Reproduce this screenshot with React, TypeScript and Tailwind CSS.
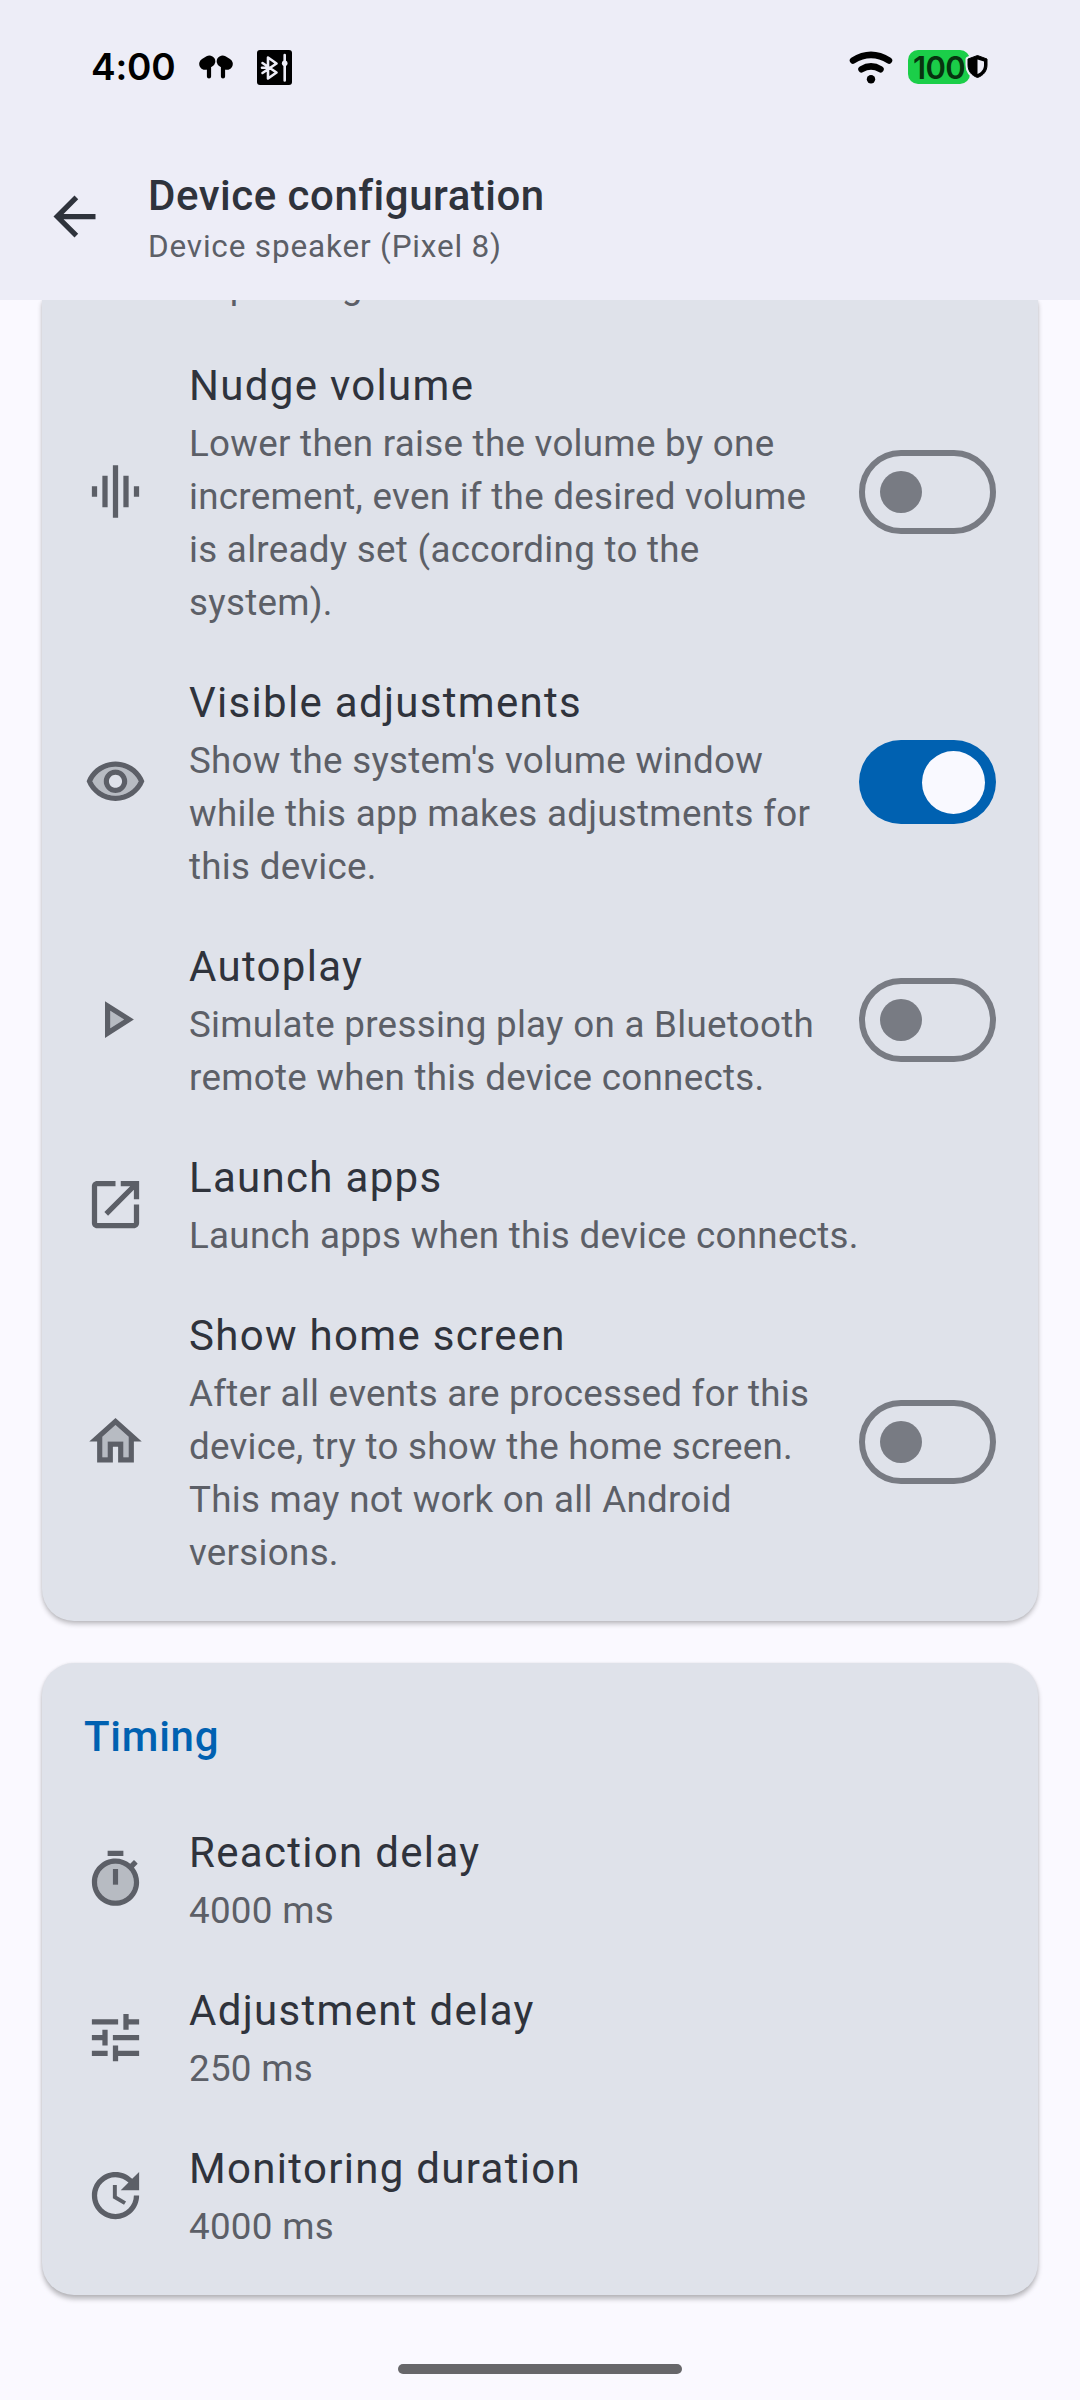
import type { ReactNode } from "react";

function Icon({ children, className = "" }: { children: ReactNode; className?: string }) {
  return (
    <svg viewBox="0 0 24 24" fill="currentColor" className={`size-[63px] shrink-0 ${className}`}>
      {children}
    </svg>
  );
}

const icons = {
  wave: <path d="M7 18h2V6H7v12zm4 4h2V2h-2v20zm-8-8h2v-4H3v4zm12 4h2V6h-2v12zm4-8v4h2v-4h-2z" />,
  eye: (
    <>
      <path
        opacity=".3"
        d="M12 6c-3.79 0-7.17 2.13-8.82 5.500C4.830 14.870 8.210 17 12 17s7.170-2.130 8.820-5.500C19.170 8.130 15.790 6 12 6zm0 10c-2.480 0-4.500-2.020-4.500-4.500S9.520 7 12 7s4.500 2.020 4.500 4.500S14.480 16 12 16z"
      />
      <path d="M12 4C7 4 2.730 7.110 1 11.500 2.730 15.890 7 19 12 19s9.270-3.110 11-7.500C21.270 7.110 17 4 12 4zm0 13c-3.790 0-7.170-2.130-8.820-5.500C4.830 8.130 8.210 6 12 6s7.170 2.130 8.820 5.500C19.170 14.870 15.790 17 12 17zm0-10c-2.480 0-4.500 2.020-4.500 4.500S9.520 16 12 16s4.500-2.020 4.500-4.500S14.480 7 12 7zm0 7c-1.380 0-2.500-1.120-2.500-2.500S10.620 9 12 9s2.500 1.120 2.500 2.500S13.380 14 12 14z" />
    </>
  ),
  play: (
    <>
      <path opacity=".3" d="M10 8.640v6.720L15.270 12z" />
      <path d="M8 19l11-7L8 5v14zm2-10.360L15.270 12 10 15.360V8.640z" />
    </>
  ),
  launch: (
    <path d="M5 3h7v2H5v14h14v-7h2v7c0 1.100-.9 2-2 2H5c-1.110 0-2-.9-2-2V5c0-1.100.89-2 2-2zM14 3h7v7h-2V6.410l-9.830 9.830-1.410-1.410L17.590 5H14V3z" />
  ),
  home: (
    <>
      <path opacity=".3" d="M12 5.690l-5 4.500V18h2v-6h6v6h2v-7.810l-5-4.500z" />
      <path d="M12 3 2 12h3v8h6v-6h2v6h6v-8h3L12 3zm5 15h-2v-6H9v6H7v-7.810l5-4.500 5 4.500V18z" />
    </>
  ),
  timer: (
    <>
      <path
        opacity=".3"
        d="M12 6c-3.870 0-7 3.130-7 7s3.130 7 7 7 7-3.130 7-7-3.130-7-7-7zm1 8h-2V8h2v6z"
      />
      <path d="M15 1H9v2h6V1zm-4 13h2V8h-2v6zm8.030-6.610 1.420-1.420c-.43-.51-.9-.99-1.410-1.410l-1.420 1.420C16.070 4.740 14.120 4 12 4c-4.970 0-9 4.030-9 9s4.020 9 9 9 9-4.030 9-9c0-2.120-.74-4.070-1.970-5.610zM12 20c-3.870 0-7-3.130-7-7s3.130-7 7-7 7 3.130 7 7-3.130 7-7 7z" />
    </>
  ),
  tune: (
    <path d="M3 17v2h6v-2H3zM3 5v2h10V5H3zm10 16v-2h8v-2h-8v-2h-2v6h2zM7 9v2H3v2h4v2h2V9H7zm14 4v-2H11v2h10zm-6-4h2V7h4V5h-4V3h-2v6z" />
  ),
  update: (
    <path d="M11 8v5l4.250 2.520.77-1.280-3.520-2.090V8H11zm10 2V3l-2.640 2.640C16.740 4.010 14.490 3 12 3c-4.970 0-9 4.030-9 9s4.030 9 9 9 9-4.030 9-9h-2c0 3.860-3.140 7-7 7s-7-3.140-7-7 3.140-7 7-7c1.930 0 3.680.79 4.950 2.050L14 10h7z" />
  ),
};

function Switch({ on }: { on: boolean }) {
  return on ? (
    <span className="flex h-[84px] w-[137px] shrink-0 items-center justify-end rounded-full bg-[#0061b1] pr-[11px]">
      <span className="size-[63px] rounded-full bg-[#f9f9ff]" />
    </span>
  ) : (
    <span className="flex h-[84px] w-[137px] shrink-0 items-center rounded-full border-6 border-[#787b83] pl-[15px]">
      <span className="size-[42px] rounded-full bg-[#787b83]" />
    </span>
  );
}

type RowProps = { icon: ReactNode; title: string; lines: string[]; on?: boolean };

function Row({ icon, title, lines, on }: RowProps) {
  return (
    <div className="flex items-center py-[21px] pr-[42px] pl-[42px]">
      <Icon className="text-[#5c5f67]">{icon}</Icon>
      <div className="ml-[42px] grow whitespace-nowrap">
        <h3 className="text-[42px] leading-[63px] tracking-[1.31px] text-[#2f333c]">{title}</h3>
        {lines.map((line) => (
          <p key={line} className="text-[36.75px] leading-[53px] tracking-[0.28px] text-[#5c5f67]">
            {line}
          </p>
        ))}
      </div>
      {on !== undefined && <Switch on={on} />}
    </div>
  );
}

export default function App() {
  return (
    <div className="flex h-[2400px] w-[1080px] flex-col overflow-hidden bg-[#faf9ff] font-['Roboto',sans-serif]">
      <header className="relative z-10 h-[300px] shrink-0 bg-[#ededf7]">
        <div className="flex h-[132px] items-center pr-[91px] pl-[91px] text-black">
          <span className="w-[85px] font-['Inter',sans-serif] text-[37px] leading-none font-semibold tracking-[-0.2px] whitespace-nowrap">
            4:00
          </span>
          <svg viewBox="0 0 34 25" className="mt-[3px] ml-[23px] h-[25px] w-[34px]">
            <g stroke="#000" strokeLinecap="round">
              <path d="M6 9 10.500 6.300M28 9 23.500 6.300" strokeWidth="11.600" />
              <path d="M10 9V21.500M24 9V21.500" strokeWidth="4.200" />
            </g>
          </svg>
          <svg viewBox="0 0 35 35" className="mt-[3px] ml-[24px] h-[35px] w-[35px]">
            <rect width="35" height="35" rx="3" />
            <g fill="none" stroke="#ededf7" strokeWidth="2.600" strokeLinecap="round" strokeLinejoin="round">
              <path d="m5.500 13 14 9.500-8.500 6V7.500l8.500 6-14 9.500M5 17.800h6M27.700 5v25.500" />
            </g>
            <circle cx="27.700" cy="13.300" r="2.800" fill="#ededf7" />
          </svg>
          <svg viewBox="0 0 44 33" className="mt-[2px] mr-[15px] ml-auto h-[33px] w-[44px]">
            <g fill="none" stroke="#000" strokeWidth="6.500" strokeLinecap="round">
              <path d="M4 9.500Q22 -1.800 40 9.500" />
              <path d="M12.500 18.300Q22 12.500 31.500 18.300" />
            </g>
            <circle cx="22" cy="28.300" r="4.200" />
          </svg>
          <div className="relative mt-[2px] mr-[19px] flex h-[34px] w-[62px] items-center rounded-[10px] bg-[#1bce49] pl-[5px]">
            <span className="font-['Inter',sans-serif] text-[31px] leading-none font-semibold tracking-[-0.6px] text-[#07340f]">
              100
            </span>
            <svg viewBox="0 0 27 31" className="absolute top-[2px] left-[56px] h-[31px] w-[27px]">
              <path
                d="M13.500 3.500 23 7v6c0 6-3.500 10.500-9.500 12.500C7.500 23.500 4 19 4 13V7z"
                stroke="#ededf7"
                strokeWidth="5"
                strokeLinejoin="round"
              />
              <path
                d="M13.500 3.500 23 7v6c0 6-3.500 10.500-9.500 12.500C7.500 23.500 4 19 4 13V7z"
                stroke="#000"
                strokeWidth="1"
                strokeLinejoin="round"
              />
              <path d="M13.500 7.500 20 9.500V13c0 4-2.300 7.200-6.500 9z" fill="#ededf7" />
            </svg>
          </div>
        </div>
        <div className="flex h-[168px] items-center pl-[43px]">
          <Icon className="text-[#2f333c]">
            <path d="M20 11H7.830l5.590-5.590L12 4l-8 8 8 8 1.410-1.410L7.830 13H20v-2z" />
          </Icon>
          <div className="ml-[42px] pt-[5px] whitespace-nowrap">
            <h1 className="text-[42px] leading-[56px] font-medium tracking-[0.51px] text-[#2f333c]">
              Device configuration
            </h1>
            <p className="text-[31.5px] leading-[46px] tracking-[0.82px] text-[#5c5f67]">Device speaker (Pixel 8)</p>
          </div>
        </div>
      </header>

      <main className="grow px-[42px]">
        <section className="rounded-b-[32px] bg-[#dfe2ea] pb-[21px] shadow-[0_3px_5px_rgba(0,0,0,0.24),0_0_3px_rgba(0,0,0,0.08)]">
          <div className="flex h-[33px] items-end pb-[21px] pl-[147px]">
            <p className="text-[36.75px] leading-[53px] tracking-[0.28px] text-[#5c5f67]">depending</p>
          </div>
          <Row
            icon={icons.wave}
            title="Nudge volume"
            lines={[
              "Lower then raise the volume by one",
              "increment, even if the desired volume",
              "is already set (according to the",
              "system).",
            ]}
            on={false}
          />
          <Row
            icon={icons.eye}
            title="Visible adjustments"
            lines={[
              "Show the system's volume window",
              "while this app makes adjustments for",
              "this device.",
            ]}
            on={true}
          />
          <Row
            icon={icons.play}
            title="Autoplay"
            lines={["Simulate pressing play on a Bluetooth", "remote when this device connects."]}
            on={false}
          />
          <Row icon={icons.launch} title="Launch apps" lines={["Launch apps when this device connects."]} />
          <Row
            icon={icons.home}
            title="Show home screen"
            lines={[
              "After all events are processed for this",
              "device, try to show the home screen.",
              "This may not work on all Android",
              "versions.",
            ]}
            on={false}
          />
        </section>

        <section className="mt-[42px] rounded-[32px] bg-[#dfe2ea] pb-[21px] shadow-[0_4px_5px_rgba(0,0,0,0.26),0_0_3px_rgba(0,0,0,0.08)]">
          <h2 className="px-[42px] pt-[42px] pb-[32px] text-[42px] leading-[63px] font-medium tracking-[0.75px] text-[#0061b1]">
            Timing
          </h2>
          <Row icon={icons.timer} title="Reaction delay" lines={["4000 ms"]} />
          <Row icon={icons.tune} title="Adjustment delay" lines={["250 ms"]} />
          <Row icon={icons.update} title="Monitoring duration" lines={["4000 ms"]} />
        </section>
      </main>

      <footer className="flex h-[63px] shrink-0 justify-center pt-[27px]">
        <span className="h-[10px] w-[284px] rounded-full bg-[#67676a]" />
      </footer>
    </div>
  );
}
